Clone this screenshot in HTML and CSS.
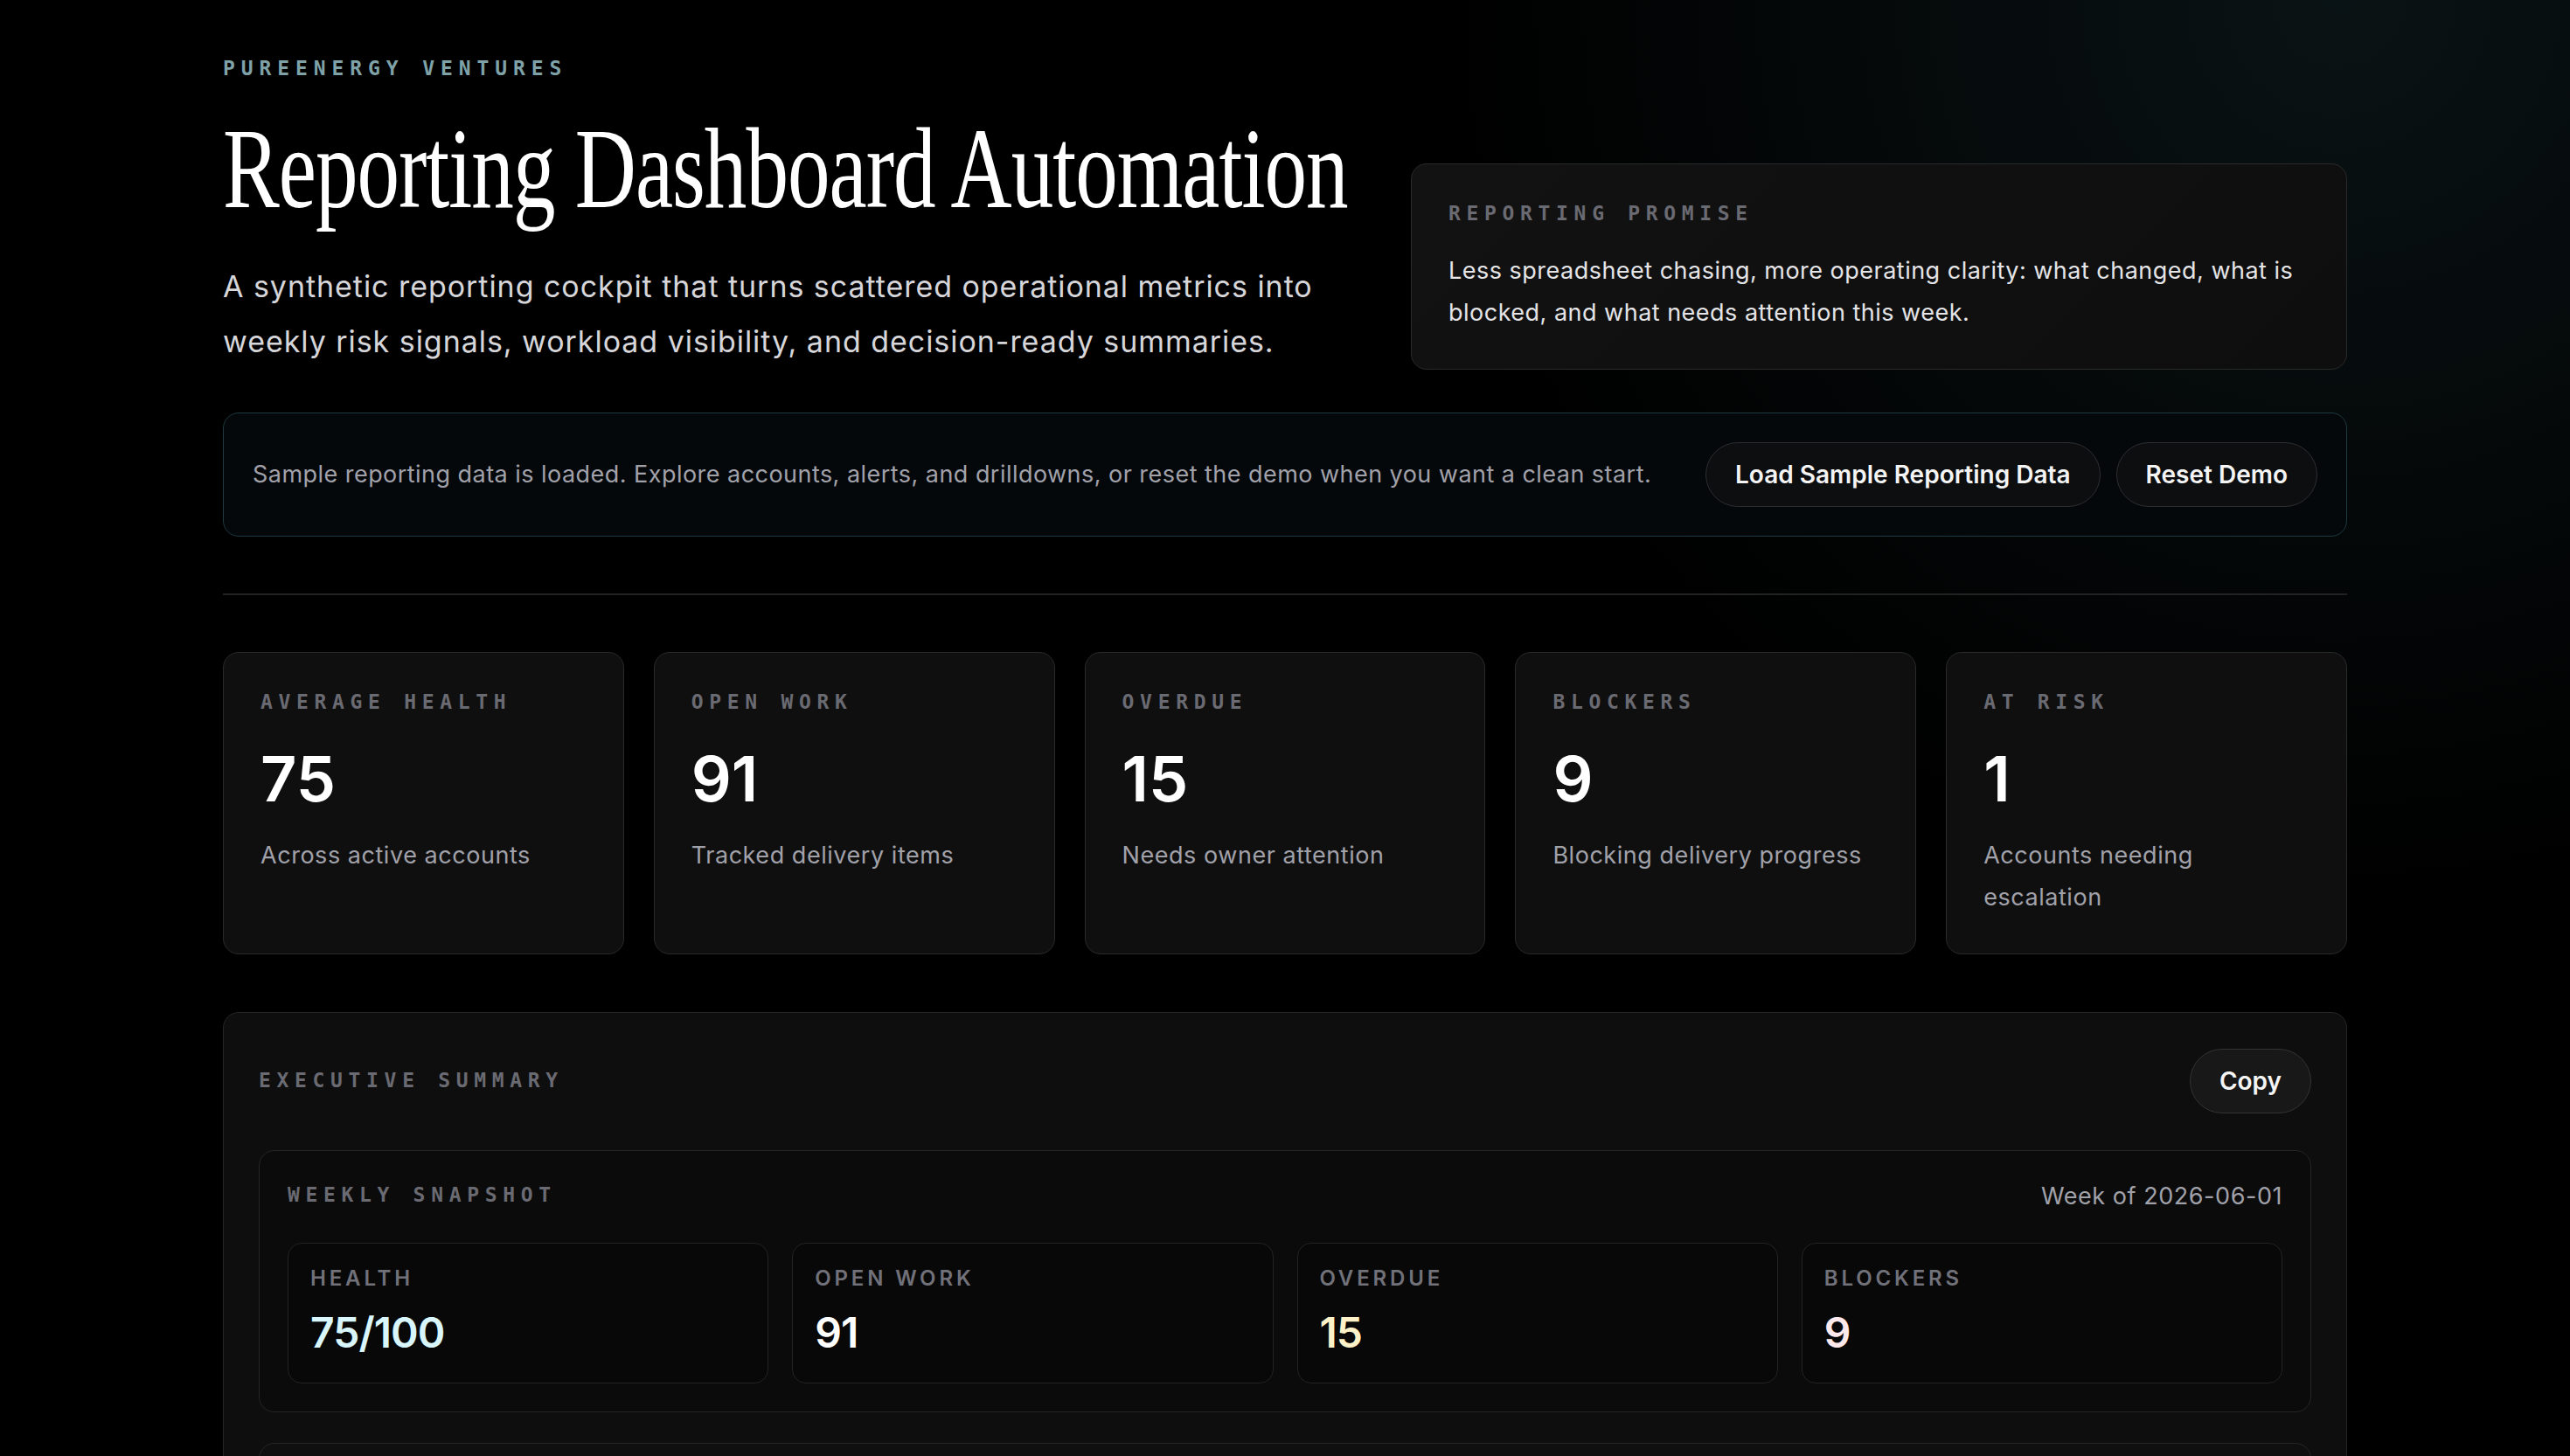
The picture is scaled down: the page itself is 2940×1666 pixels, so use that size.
FILE: index.html
```html
<!DOCTYPE html>
<html>
<head>
    <title>Reporting Dashboard Automation</title>
    <link rel="stylesheet" href="styles.css">
</head>
<body>
    <div class="page">
        <div class="hero">
            <div class="hero-text">
                <div class="eyebrow">PureEnergy Ventures</div>
                <h1 class="title">Reporting Dashboard Automation</h1>
                <p class="lead">A synthetic reporting cockpit that turns scattered operational metrics into weekly risk signals, workload visibility, and decision-ready summaries.</p>
            </div>
            <div class="promise">
                <div class="label">Reporting Promise</div>
                <p class="promise-text">Less spreadsheet chasing, more operating clarity: what changed, what is blocked, and what needs attention this week.</p>
            </div>
        </div>

        <div class="banner">
            <span class="banner-text">Sample reporting data is loaded. Explore accounts, alerts, and drilldowns, or reset the demo when you want a clean start.</span>
            <div class="banner-actions">
                <button class="btn">Load Sample Reporting Data</button>
                <button class="btn">Reset Demo</button>
            </div>
        </div>

        <hr class="divider">

        <div class="metrics">
            <div class="metric">
                <div class="label">Average Health</div>
                <div class="metric-value">75</div>
                <div class="metric-note">Across active accounts</div>
            </div>
            <div class="metric">
                <div class="label">Open Work</div>
                <div class="metric-value">91</div>
                <div class="metric-note">Tracked delivery items</div>
            </div>
            <div class="metric">
                <div class="label">Overdue</div>
                <div class="metric-value">15</div>
                <div class="metric-note">Needs owner attention</div>
            </div>
            <div class="metric">
                <div class="label">Blockers</div>
                <div class="metric-value">9</div>
                <div class="metric-note">Blocking delivery progress</div>
            </div>
            <div class="metric">
                <div class="label">At Risk</div>
                <div class="metric-value">1</div>
                <div class="metric-note">Accounts needing escalation</div>
            </div>
        </div>

        <div class="panel">
            <div class="panel-head">
                <div class="label">Executive Summary</div>
                <button class="btn btn-copy">Copy</button>
            </div>

            <div class="snapshot">
                <div class="snapshot-head">
                    <div class="label">Weekly Snapshot</div>
                    <span class="week">Week of 2026-06-01</span>
                </div>
                <div class="snapshot-grid">
                    <div class="stat">
                        <div class="stat-label">Health</div>
                        <div class="stat-value health">75/100</div>
                    </div>
                    <div class="stat">
                        <div class="stat-label">Open Work</div>
                        <div class="stat-value">91</div>
                    </div>
                    <div class="stat">
                        <div class="stat-label">Overdue</div>
                        <div class="stat-value overdue">15</div>
                    </div>
                    <div class="stat">
                        <div class="stat-label">Blockers</div>
                        <div class="stat-value blockers">9</div>
                    </div>
                </div>
            </div>

            <div class="snapshot snapshot-next"></div>
        </div>
    </div>
</body>
</html>
```

FILE: styles.css
```css
body {
    margin: 0;
    padding: 0;
    font-family: Inter, "Noto Sans", sans-serif;
    color: #f4f4f5;
    background-color: #000;
    background-image: radial-gradient(circle at 91% 0%, rgba(22, 42, 46, 0.45), rgba(0, 0, 0, 0) 30%);
    background-repeat: no-repeat;
    min-height: 1666px;
}
.page {
    max-width: 2430px;
    margin: 0 auto;
    padding: 65px 0 80px;
}
.hero {
    display: grid;
    grid-template-columns: minmax(0, 1fr) 1071px;
    gap: 48px;
    align-items: end;
}
.eyebrow {
    font-family: "DejaVu Sans Mono", monospace;
    font-size: 23px;
    font-weight: 700;
    line-height: 27.6px;
    letter-spacing: 0.3em;
    text-transform: uppercase;
    color: #7fa2a8;
}
.title {
    margin: 34px 0 0;
    font-family: "Liberation Serif", serif;
    font-weight: 400;
    font-size: 131px;
    line-height: 131px;
    letter-spacing: -0.01em;
    white-space: nowrap;
    transform: scaleX(0.741);
    transform-origin: left center;
    color: #fff;
}
.lead {
    margin: 38px 0 0;
    font-size: 34px;
    line-height: 63.5px;
    letter-spacing: 0.028em;
    color: #d6d6da;
}
.promise {
    border: 1px solid #2a2a2c;
    border-radius: 18px;
    background: linear-gradient(135deg, #121212, #0e0e0e);
    padding: 43px 42px 40px;
}
.label {
    font-family: "DejaVu Sans Mono", monospace;
    font-size: 23px;
    font-weight: 700;
    line-height: 27.6px;
    letter-spacing: 0.29em;
    text-transform: uppercase;
    color: #6a6a72;
}
.promise-text {
    margin: 27px 0 0;
    font-size: 27px;
    line-height: 48px;
    letter-spacing: 0.018em;
    color: #e4e4e7;
}
.banner {
    margin-top: 49px;
    display: flex;
    align-items: center;
    justify-content: space-between;
    padding: 33px;
    border: 1px solid #1e3a41;
    border-radius: 18px;
    background-color: #05080b;
}
.banner-text {
    font-size: 27px;
    letter-spacing: 0.017em;
    color: #a1a1aa;
}
.banner-actions {
    display: flex;
    gap: 18px;
}
.btn {
    height: 74px;
    padding: 0 33px;
    border: 1px solid #2c2e30;
    border-radius: 999px;
    background-color: #0c0e10;
    color: #f4f4f5;
    font-family: Inter, sans-serif;
    font-size: 28px;
    font-weight: 600;
}
.divider {
    margin: 65px 0;
    border: 0;
    border-top: 2px solid #222;
}
.metrics {
    display: grid;
    grid-template-columns: repeat(5, 1fr);
    gap: 34px;
}
.metric {
    border: 1px solid #2a2a2c;
    border-radius: 18px;
    background-color: #0f0f0f;
    padding: 43px 42px 40px;
}
.metric-value {
    margin-top: 38px;
    font-size: 72px;
    line-height: 72px;
    font-weight: 600;
    color: #fff;
}
.metric-note {
    margin-top: 28px;
    font-size: 27px;
    line-height: 48px;
    letter-spacing: 0.02em;
    color: #a1a1aa;
}
.panel {
    margin-top: 66px;
    border: 1px solid #262628;
    border-radius: 18px;
    background-color: #0e0e0e;
    padding: 41px 40px;
}
.panel-head {
    display: flex;
    align-items: center;
    justify-content: space-between;
}
.btn-copy {
    padding: 0 33px;
    background-color: #181818;
    border-color: #333;
}
.snapshot {
    margin-top: 42px;
    border: 1px solid #262628;
    border-radius: 18px;
    background-color: #0b0b0b;
    padding: 32px;
}
.snapshot-next {
    margin-top: 35px;
    height: 200px;
    background-color: #0f0f0f;
}
.snapshot-head {
    display: flex;
    align-items: center;
    justify-content: space-between;
    height: 38px;
}
.week {
    font-size: 27px;
    letter-spacing: 0.02em;
    color: #a1a1aa;
}
.snapshot-grid {
    margin-top: 35px;
    display: grid;
    grid-template-columns: repeat(4, 1fr);
    gap: 27px;
}
.stat {
    border: 1px solid #232325;
    border-radius: 16px;
    background-color: #080808;
    padding: 24px 25px 28px;
}
.stat-label {
    font-size: 24px;
    line-height: 31px;
    font-weight: 600;
    letter-spacing: 0.16em;
    text-transform: uppercase;
    color: #71717a;
}
.stat-value {
    margin-top: 18px;
    font-size: 48px;
    line-height: 57.6px;
    font-weight: 600;
    letter-spacing: -0.02em;
    color: #fff;
}
.health {
    color: #d8f6fb;
}
.overdue {
    color: #fdf1c8;
}
.blockers {
    color: #fde9eb;
}
```
